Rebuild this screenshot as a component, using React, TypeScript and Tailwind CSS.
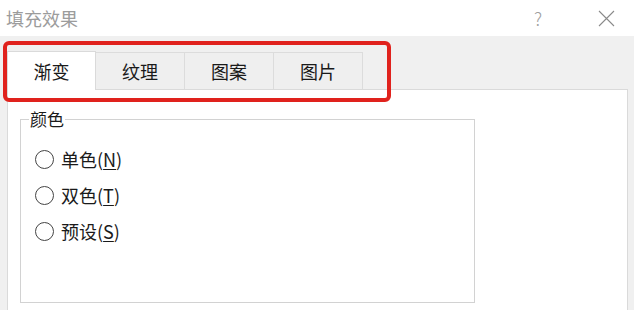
import React from 'react'

const FONT = { fontFamily: '"Noto Sans CJK SC", "Microsoft YaHei", sans-serif' }

const tabs = ['渐变', '纹理', '图案', '图片']

const options: { label: string; key: string }[] = [
  { label: '单色', key: 'N' },
  { label: '双色', key: 'T' },
  { label: '预设', key: 'S' },
]

export default function App() {
  return (
    <div className="relative w-[634px] h-[310px] overflow-hidden bg-[#f0f0f0] text-[#1a1a1a]" style={FONT}>
      {/* title bar */}
      <div className="flex h-[36px] items-center bg-white pl-[6px] pr-[19px]">
        <span className="text-[18px] leading-none text-[#9c9c9c]">填充效果</span>
        <span className="ml-auto mr-[56px] text-[18px] font-light leading-none text-[#a0a0a0]">?</span>
        <svg className="h-[17px] w-[17px]" viewBox="0 0 17 17" fill="none" stroke="#8a8a8a" strokeWidth={1.1}>
          <path d="M1 1l15 15M16 1L1 16" />
        </svg>
      </div>

      <div className="px-[7px] pt-[15px]">
        {/* tab strip */}
        <div className="flex h-[38px] items-end">
          {tabs.map((t, i) =>
            i === 0 ? (
              <div
                key={t}
                className="relative z-10 -mb-px flex h-[39px] w-[89px] items-center justify-center border border-b-0 border-[#dadada] bg-white text-[18px]"
              >
                {t}
              </div>
            ) : (
              <div
                key={t}
                className="flex h-[37px] w-[89px] items-center justify-center border border-l-0 border-b-0 border-[#dcdcdc] bg-[#efefef] text-[18px]"
              >
                {t}
              </div>
            )
          )}
        </div>

        {/* panel */}
        <div className="h-[240px] w-[621px] border border-[#dadada] bg-white pl-[12px] pt-[29px]">
          <div className="relative h-[184px] w-[455px] border border-[#d2d2d2]">
            <span className="absolute -top-[10px] left-[8px] bg-white px-[1px] text-[17px] leading-[18px]">颜色</span>
            <div className="flex flex-col pl-[14px] pt-[21px]">
              {options.map((o) => (
                <div key={o.key} className="flex h-[36px] items-center">
                  <span className="h-[19px] w-[19px] rounded-full border border-[#444] bg-white" />
                  <span className="ml-[7px] text-[18px] leading-none">
                    {o.label}(<span className="underline underline-offset-2">{o.key}</span>)
                  </span>
                </div>
              ))}
            </div>
          </div>
        </div>
      </div>

      {/* red annotation box */}
      <div className="pointer-events-none absolute left-[3px] top-[41px] h-[61px] w-[388px] rounded-[6px] border-[4px] border-[#e0221d]" />
    </div>
  )
}
